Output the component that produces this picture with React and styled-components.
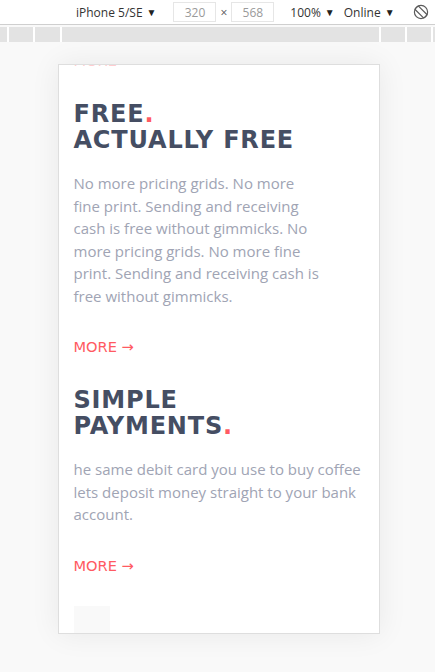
import styled, { createGlobalStyle } from "styled-components";

const GlobalStyle = createGlobalStyle`
    html, body {
        margin: 0;
        padding: 0;
        background: #f9f9f9;
        height: 100%;
        overflow: hidden;
    }
    #root {
        height: 100%;
    }
`

const Page = styled.div`
    display: flex;
    flex-direction: column;
    height: 672px;
    font-family: "Open Sans", "Liberation Sans", sans-serif;
`

const Toolbar = styled.div`
    display: flex;
    align-items: center;
    height: 24px;
    padding-left: 76px;
    background: #ffffff;
    border-bottom: 1px solid #cfcfcf;
    font-size: 12px;
    color: #333333;
`

const Select = styled.span`
    display: flex;
    align-items: center;
    gap: 4px;
    margin-left: ${props => props.$gap || 0}px;
    white-space: nowrap;

    &:after {
        content: '▼';
        font-size: 10px;
        color: #222;
    }
`

const SizeBox = styled.span`
    display: flex;
    align-items: center;
    justify-content: center;
    width: 43px;
    height: 20px;
    box-sizing: border-box;
    border: 1px solid #e6e6e6;
    color: #9a9a9a;
    margin-left: ${props => props.$gap || 0}px;
`

const Times = styled.span`
    margin: 0 4px;
    color: #555;
    font-size: 12px;
`

const RotateIcon = styled.svg`
    margin-left: 18px;
    width: 16px;
    height: 16px;
`

const Ruler = styled.div`
    display: flex;
    gap: 2px;
    height: 15px;
    margin-top: 2px;
    background: #ffffff;
`

const RulerCell = styled.div`
    flex: 0 0 ${props => props.$w}px;
    background: #e3e3e3;
`

const Viewport = styled.div`
    flex: 1;
    display: flex;
    justify-content: center;
    align-items: flex-start;
    padding: 22px 0 0 2px;
    background: #f9f9f9;
`

const Device = styled.div`
    width: 320px;
    height: 568px;
    overflow: hidden;
    background: #ffffff;
    border: 1px solid #dedede;
    box-shadow: 0 0 28px rgba(0, 0, 0, 0.07);
`

const Content = styled.div`
    display: flex;
    flex-direction: column;
    gap: 30px;
    padding: 0 15px;
    margin-top: -14px;
`

const Section = styled.section`
    display: flex;
    flex-direction: column;
    align-items: flex-start;
    gap: 19px;
`

const Title = styled.h2`
    margin: 0;
    font-family: "DejaVu Sans", "Liberation Sans", sans-serif;
    font-weight: 700;
    font-size: 24px;
    line-height: 26px;
    letter-spacing: 0.8px;
    color: #454e63;
`

const Dot = styled.span`
    color: #ff5a62;
`

const Text = styled.p`
    margin: 0;
    max-width: ${props => props.$narrow ? "250px" : "none"};
    font-size: 15px;
    line-height: 22.5px;
    color: #a0a4b4;
`

const More = styled.a`
    display: block;
    margin-top: ${props => props.$push ? "11px" : "0"};
    font-family: "DejaVu Sans", "Liberation Sans", sans-serif;
    font-size: 14.6px;
    line-height: 20px;
    color: #ff5a62;
    text-decoration: none;
    opacity: ${props => props.$faded ? 0.3 : 1};
`

const Picture = styled.div`
    width: 36px;
    height: 40px;
    background: #f7f7f7;
    opacity: 0.8;
`

const sections = [
    {
        title: ["FREE", "ACTUALLY FREE"],
        dotAfterFirst: true,
        text: "No more pricing grids. No more fine print. Sending and receiving cash is free without gimmicks. No more pricing grids. No more fine print. Sending and receiving cash is free without gimmicks.",
        narrow: true,
    },
    {
        title: ["SIMPLE", "PAYMENTS"],
        dotAfterFirst: false,
        text: "he same debit card you use to buy coffee lets deposit money straight to your bank account.",
        narrow: false,
    },
]

function App() {
    return (
        <Page>
            <GlobalStyle />
            <Toolbar>
                <Select>iPhone 5/SE</Select>
                <SizeBox $gap={17}>320</SizeBox>
                <Times>×</Times>
                <SizeBox>568</SizeBox>
                <Select $gap={16}>100%</Select>
                <Select $gap={9}>Online</Select>
                <RotateIcon viewBox="0 0 16 16">
                    <circle cx="8" cy="8" r="6.6" fill="none" stroke="#5a5a5a" strokeWidth="1.2" />
                    <rect x="5.6" y="1.6" width="4.8" height="12.8" rx="0.8" fill="none" stroke="#5a5a5a" strokeWidth="1.2" transform="rotate(-45 8 8)" />
                </RotateIcon>
            </Toolbar>
            <Ruler>
                {[7, 24, 25, 317, 24, 24, 4].map((w, i) => <RulerCell key={i} $w={w} />)}
            </Ruler>
            <Viewport>
                <Device>
                    <Content>
                        <More $faded href="#">MORE →</More>
                        {sections.map((s, index) =>
                            <Section key={index}>
                                <Title>
                                    {s.title[0]}{s.dotAfterFirst && <Dot>.</Dot>}<br />
                                    {s.title[1]}{!s.dotAfterFirst && <Dot>.</Dot>}
                                </Title>
                                <Text $narrow={s.narrow}>{s.text}</Text>
                                <More $push href="#">MORE →</More>
                            </Section>)
                        }
                        <Picture />
                    </Content>
                </Device>
            </Viewport>
        </Page>
    )
}

export default App;
